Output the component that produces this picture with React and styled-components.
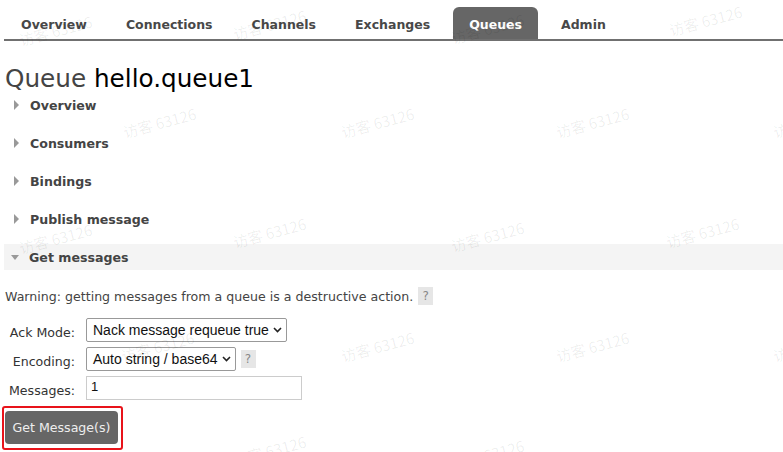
import React from "react";
import styled, { createGlobalStyle } from "styled-components";

const Global = createGlobalStyle`
  html, body { margin: 0; padding: 0; background: #fff; }
  body { font-family: "DejaVu Sans", Verdana, sans-serif; color: #333; overflow: hidden; }
  * { box-sizing: border-box; }
`;

const Page = styled.div`
  position: relative;
  width: 783px;
  height: 452px;
  overflow: hidden;
  padding: 7px 0 0 4px;
`;

const Nav = styled.ul`
  display: flex;
  list-style: none;
  margin: 0;
  padding: 0 0 0 1px;
  border-bottom: 2px solid #707070;
  height: 34px;
  align-items: flex-end;
`;

const Tab = styled.li`
  height: 32px;
  padding: 2px 16px 0;
  margin-right: 7px;
  display: flex;
  align-items: center;
  font-weight: bold;
  font-size: 12.5px;
  color: ${(p) => (p.$active ? "#fff" : "#484848")};
  background: ${(p) => (p.$active ? "#666" : "transparent")};
  border-radius: 6px 6px 0 0;
`;

const Title = styled.h1`
  margin: 23px 0 0 1px;
  font-weight: normal;
  font-size: 24.7px;
  line-height: 30px;
  color: #444;
  b { font-weight: normal; color: #000; }
`;

const Sections = styled.div`
  display: flex;
  flex-direction: column;
  gap: 12px;
  margin-top: -2px;
`;

const SectionHead = styled.div`
  display: flex;
  align-items: center;
  height: 26px;
  padding-left: ${(p) => (p.$open ? "7px" : "10px")};
  background: ${(p) => (p.$open ? "#f4f4f4" : "transparent")};
  font-weight: bold;
  font-size: 12.6px;
  color: #444;
`;

const Arrow = styled.span`
  display: inline-block;
  width: 0;
  height: 0;
  margin-right: ${(p) => (p.$open ? "10px" : "11px")};
  ${(p) =>
    p.$open
      ? `border-left: 4.5px solid transparent; border-right: 4.5px solid transparent; border-top: 5px solid #999;`
      : `border-top: 5px solid transparent; border-bottom: 5px solid transparent; border-left: 5px solid #999;`}
`;

const Warning = styled.p`
  margin: 17px 0 0 1px;
  font-size: 12.6px;
  color: #444;
  display: flex;
  align-items: center;
  gap: 5px;
`;

const Help = styled.span`
  display: inline-flex;
  align-items: center;
  justify-content: center;
  width: 15px;
  height: 18px;
  background: #e6e6e6;
  color: #888;
  font-size: 12px;
`;

const Form = styled.div`
  display: grid;
  grid-template-columns: 71px auto;
  column-gap: 11px;
  row-gap: 5px;
  margin-top: 13px;
  align-items: center;
  justify-content: start;
`;

const Label = styled.label`
  justify-self: end;
  font-size: 12.6px;
  color: #333;
  padding-top: 5px;
`;

const Field = styled.div`
  display: flex;
  align-items: center;
  gap: 5px;
`;

const Select = styled.div`
  display: flex;
  align-items: center;
  gap: 4px;
  height: 24px;
  padding: 0 4px 0 6px;
  border: 1px solid #999;
  border-radius: 2px;
  font-family: "Liberation Sans", Arial, sans-serif;
  font-size: 14px;
  color: #111;
  background: #fff;
  white-space: nowrap;
`;

const Input = styled.div`
  width: 216px;
  height: 24px;
  border: 1px solid #ccc;
  padding: 2px 4px;
  font-family: "Liberation Sans", Arial, sans-serif;
  font-size: 13px;
  color: #111;
`;

const Annot = styled.div`
  margin: 6px 0 0 -2px;
  width: 121px;
  height: 44px;
  border: 2px solid #e8131a;
  border-radius: 3px;
  padding: 3px 0 0 1px;
`;

const Button = styled.button`
  display: block;
  width: 113px;
  height: 33px;
  border: none;
  border-radius: 4px;
  background: #666;
  color: #eee;
  font-family: "DejaVu Sans", Verdana, sans-serif;
  font-size: 12.6px;
  padding: 0;
`;

const Watermark = styled.span`
  position: absolute;
  pointer-events: none;
  white-space: nowrap;
  font-family: "Noto Sans CJK SC", sans-serif;
  font-size: 15px;
  color: rgba(0, 0, 0, 0.07);
  transform: rotate(-15deg);
`;

const Chevron = () => (
  <svg width="9" height="6" viewBox="0 0 9 6">
    <path d="M1 1l3.5 3.5L8 1" fill="none" stroke="#222" strokeWidth="1.6" />
  </svg>
);

const marks = [
  [18, 20], [232, 14], [450, 18], [668, 10],
  [122, 112], [340, 112], [555, 112], [772, 112],
  [18, 228], [232, 222], [450, 226], [665, 222],
  [120, 336], [340, 336], [555, 336], [772, 336],
  [232, 440], [450, 444],
];

export default function App() {
  return (
    <>
      <Global />
      <Page>
        <Nav>
          {["Overview", "Connections", "Channels", "Exchanges", "Queues", "Admin"].map((t) => (
            <Tab key={t} $active={t === "Queues"}>{t}</Tab>
          ))}
        </Nav>
        <Title>Queue <b>hello.queue1</b></Title>
        <Sections>
          {["Overview", "Consumers", "Bindings", "Publish message"].map((s) => (
            <SectionHead key={s}><Arrow />{s}</SectionHead>
          ))}
          <SectionHead $open><Arrow $open />Get messages</SectionHead>
        </Sections>
        <Warning>
          Warning: getting messages from a queue is a destructive action. <Help>?</Help>
        </Warning>
        <Form>
          <Label>Ack Mode:</Label>
          <Field>
            <Select>Nack message requeue true <Chevron /></Select>
          </Field>
          <Label>Encoding:</Label>
          <Field>
            <Select>Auto string / base64 <Chevron /></Select>
            <Help>?</Help>
          </Field>
          <Label>Messages:</Label>
          <Field>
            <Input>1</Input>
          </Field>
        </Form>
        <Annot>
          <Button>Get Message(s)</Button>
        </Annot>
        {marks.map(([x, y], i) => (
          <Watermark key={i} style={{ left: x, top: y }}>访客 63126</Watermark>
        ))}
      </Page>
    </>
  );
}
